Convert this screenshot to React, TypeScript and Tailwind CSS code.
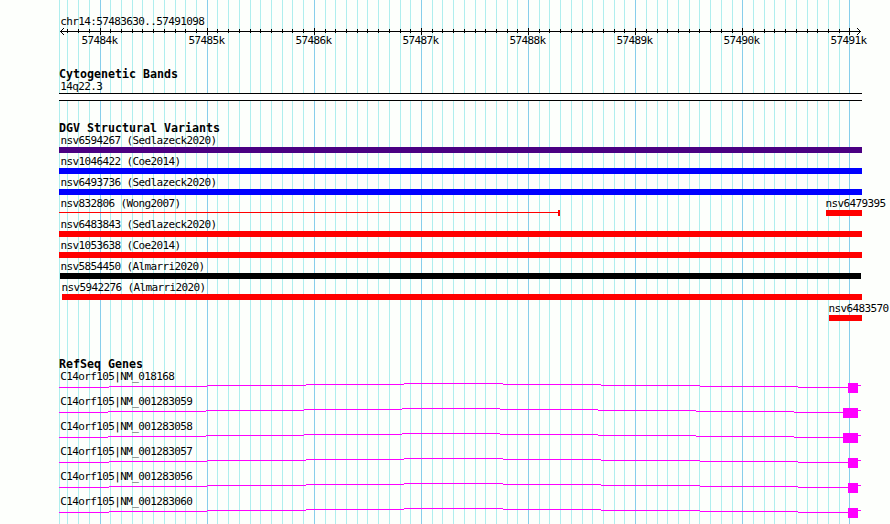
import React from 'react';

// x of every 100 bp grid line; every tenth one from index 4 is a full kb
const gridLines = [
  59, 67, 78, 89, 100, 110, 121, 132, 142, 153, 164, 175, 185, 196,
  207, 217, 228, 239, 250, 260, 271, 282, 292, 303,
  314, 325, 335, 346, 357, 367, 378, 389, 400, 410,
  421, 432, 442, 453, 464, 475, 485, 496, 507, 517,
  528, 539, 549, 560, 571, 582, 592, 603, 614, 624,
  635, 646, 657, 667, 678, 689, 699, 710, 721, 732,
  742, 753, 764, 774, 785, 796, 807, 817, 828, 839, 849,
];

const isMajor = (i: number) => i % 10 === 4;

const kbLabels = ['57484k', '57485k', '57486k', '57487k', '57488k', '57489k', '57490k', '57491k'];

interface Variant {
  name: string;
  bar: string;
  label?: string;
}

const variants: Variant[] = [
  { name: 'nsv6594267 (Sedlazeck2020)', bar: 'ml-[59px] w-[803px] bg-[#4b0082]' },
  { name: 'nsv1046422 (Coe2014)', bar: 'ml-[59px] w-[803px] bg-[#0000ff]' },
  { name: 'nsv6493736 (Sedlazeck2020)', bar: 'ml-[59px] w-[803px] bg-[#0000ff]' },
  { name: 'nsv832806 (Wong2007)', bar: '' },
  { name: 'nsv6483843 (Sedlazeck2020)', bar: 'ml-[59px] w-[803px] bg-[#ff0000]' },
  { name: 'nsv1053638 (Coe2014)', bar: 'ml-[59px] w-[803px] bg-[#ff0000]' },
  { name: 'nsv5854450 (Almarri2020)', bar: 'ml-[60px] w-[801px] bg-black' },
  { name: 'nsv5942276 (Almarri2020)', bar: 'ml-[62px] w-[800px] bg-[#ff0000]', label: 'pl-[61.4px]' },
  { name: 'nsv6483570', bar: 'ml-[829px] w-[33px] bg-[#ff0000]', label: 'pl-[828.4px]' },
];

const longSteps = [59, 109, 207, 306, 404, 503, 601, 700, 798, 848];
const shortSteps = [59, 108, 206, 304, 402, 500, 598, 696, 794, 843];

const genes = [
  { name: 'C14orf105|NM_018168', steps: longSteps },
  { name: 'C14orf105|NM_001283059', steps: shortSteps },
  { name: 'C14orf105|NM_001283058', steps: shortSteps },
  { name: 'C14orf105|NM_001283057', steps: longSteps },
  { name: 'C14orf105|NM_001283056', steps: longSteps },
  { name: 'C14orf105|NM_001283060', steps: longSteps },
];

// intron hat: rises one pixel per segment to the middle and falls again
const hatY = [4, 3, 2, 1, 0, 1, 2, 3, 4];

function Grid() {
  return (
    <svg className="absolute inset-0" width="890" height="524" shapeRendering="crispEdges">
      {gridLines.map((x, i) => (
        <rect key={x} x={x} y="0" width="1" height="524" fill={isMajor(i) ? '#87ceeb' : '#afeeee'} />
      ))}
    </svg>
  );
}

function Ruler() {
  return (
    <svg className="block" width="890" height="7" shapeRendering="crispEdges">
      <rect x="60" y="3" width="801" height="1" />
      {gridLines.slice(1).map((x, i) => (
        <rect key={x} x={x} y={isMajor(i + 1) ? 0 : 1} width="1" height={isMajor(i + 1) ? 7 : 4} />
      ))}
      {[1, 2, 3].map((d) => (
        <g key={d}>
          <rect x={60 + d} y={3 - d} width="1" height="1" />
          <rect x={60 + d} y={3 + d} width="1" height="1" />
          <rect x={860 - d} y={3 - d} width="1" height="1" />
          <rect x={860 - d} y={3 + d} width="1" height="1" />
        </g>
      ))}
    </svg>
  );
}

function Heading({ children }: { children: React.ReactNode }) {
  return <h2 className="h-[12px] pl-[59px] text-[11.63px] leading-[12px] font-bold tracking-normal">{children}</h2>;
}

function VariantRow({ name, bar, label = 'pl-[60.4px]' }: Variant) {
  return (
    <div className="h-[21px]">
      <p className={`h-[13px] leading-[13px] ${label}`}>{name}</p>
      <div className={`h-[6px] ${bar}`} />
    </div>
  );
}

// The fourth row holds two features side by side
function SplitRow() {
  return (
    <div className="flex h-[21px]">
      <div className="w-[765px]">
        <p className="h-[13px] pl-[60.4px] leading-[13px]">nsv832806 (Wong2007)</p>
        <div className="ml-[59px] flex h-[6px] w-[501px]">
          <div className="mt-[2px] h-px flex-1 bg-[#ff0000]" />
          <div className="h-[6px] w-[2px] bg-[#ff0000]" />
        </div>
      </div>
      <div>
        <p className="h-[13px] pl-[60.4px] leading-[13px]">nsv6479395</p>
        <div className="ml-[61px] h-[6px] w-[36px] bg-[#ff0000]" />
      </div>
    </div>
  );
}

function GeneRow({ name, steps }: { name: string; steps: number[] }) {
  const exon = steps[9];
  return (
    <div className="h-[25px]">
      <p className="h-[13px] pl-[60.2px] leading-[13px]">{name}</p>
      <svg className="block" width="890" height="10" fill="#ff00ff" shapeRendering="crispEdges">
        {hatY.map((y, i) => (
          <rect key={i} x={steps[i]} y={y} width={steps[i + 1] - steps[i]} height="1" />
        ))}
        <rect x={exon} y="0" width={858 - exon} height="10" />
        <rect x="858" y="2" width="3" height="1" />
      </svg>
    </div>
  );
}

export default function App() {
  return (
    <div className="relative h-[524px] w-[890px] overflow-hidden bg-[#fdfffc] font-['DejaVu_Sans_Mono',monospace] text-[11px] tracking-[-0.62px] whitespace-pre text-black">
      <Grid />
      <div className="relative">
        {/* Position and scale */}
        <div className="pt-[15px]">
          <p className="h-[13px] pl-[60.2px] leading-[13px]">chr14:57483630..57491098</p>
          <Ruler />
          <div className="-mt-px flex h-[13px] gap-[71px] pl-[81.4px] leading-[13px]">
            {kbLabels.map((label) => (
              <span key={label} className="w-[36px]">{label}</span>
            ))}
          </div>
        </div>

        {/* Cytogenetic bands */}
        <section className="pt-[21px]">
          <Heading>Cytogenetic Bands</Heading>
          <p className="h-[13px] pl-[60.2px] leading-[13px]">14q22.3</p>
          <div className="ml-[59px] h-[8px] w-[803px] border-y border-black bg-white" />
        </section>

        {/* Structural variants */}
        <section className="pt-[21px]">
          <Heading>DGV Structural Variants</Heading>
          {variants.map((v) => (v.bar ? <VariantRow key={v.name} {...v} /> : <SplitRow key={v.name} />))}
        </section>

        {/* Genes */}
        <section className="pt-[35px]">
          <Heading>RefSeq Genes</Heading>
          {genes.map((g) => (
            <GeneRow key={g.name} {...g} />
          ))}
        </section>
      </div>
    </div>
  );
}
